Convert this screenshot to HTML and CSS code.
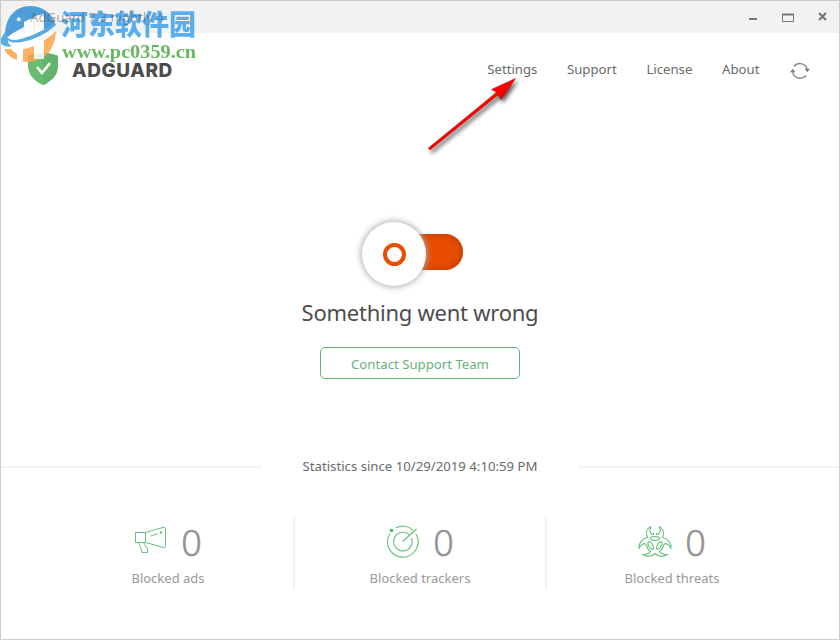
FILE: index.html
```html
<!DOCTYPE html>
<html lang="en">
<head>
<meta charset="utf-8">
<title>AdGuard</title>
<link rel="stylesheet" href="styles.css">
</head>
<body>
<div class="window">
  <header class="titlebar">
    <span class="title">AdGuard 7.3 nightly 4</span>
    <div class="controls">
      <svg width="82" height="16" viewBox="0 0 82 16" fill="none" stroke="#777">
        <path d="M1 10h8" stroke-width="2"/>
        <path d="M34.500 5.500h11v7h-11z"/><path d="M34 5.500h12" stroke-width="2"/>
        <path d="M71 4l7 7M78 4l-7 7" stroke-width="2.200"/>
      </svg>
    </div>
  </header>
  <div class="topbar">
    <div class="brand">
      <svg class="shield" width="32" height="34" viewBox="0 0 32 34"><path d="M16 1C11 1 5 2 1 4v9c0 10 6 16 15 20 9-4 15-10 15-20V4C27 2 21 1 16 1z" fill="#68bc71"/><path d="M16 1v32c9-4 15-10 15-20V4C27 2 21 1 16 1z" fill="#63b36c"/><path d="M10 15l5 6 8-10" fill="none" stroke="#fff" stroke-width="2.600"/></svg>
      <span class="wordmark">ADGUARD</span>
    </div>
    <nav class="nav">
      <a>Settings</a><a>Support</a><a>License</a><a>About</a>
      <svg class="refresh" width="20" height="18" viewBox="0 0 20 18" fill="none" stroke="#8a8a8a" stroke-width="1.500"><path d="M4 4.500A7.500 7.500 0 0 1 17.300 8M16 13.500A7.500 7.500 0 0 1 2.700 9.500"/><path d="M14.500 6.800h5.500l-2.600 3.400zM0 10.200h5.500l-2.800-3.400z" fill="#808080" stroke="none"/></svg>
    </nav>
  </div>
  <main class="status">
    <div class="switch"><div class="track"></div><div class="knob"></div></div>
    <h1>Something went wrong</h1>
    <button class="contact">Contact Support Team</button>
  </main>
  <div class="since"><i></i><span>Statistics since 10/29/2019 4:10:59 PM</span><i></i></div>
  <section class="stats">
    <div class="stat">
      <div class="value">
        <svg width="34" height="34" viewBox="0 0 34 34" fill="none" stroke="#67c27c"><path d="M1.500 7.500h10v10h-10zM11.500 7.500L29 2.500q2.500-.5 2.500 1v18q0 1.500-2 1L11.500 17.500M4 18c3 3 3 6 4 9.500h5.500V23c-2-.5-2.500-3-3.500-5M17 11l7-2.500"/><circle cx="27" cy="7.500" r="1.200" fill="#67c27c" stroke="none"/></svg>
        <b>0</b></div>
      <p>Blocked ads</p>
    </div>
    <div class="stat">
      <div class="value">
        <svg width="34" height="34" viewBox="0 0 34 34" fill="none" stroke="#67c27c" stroke-width="1.150"><path d="M10 2.700A15.300 15.300 0 0 1 27.300 5.300M30 9A15.300 15.300 0 1 1 4 8.500"/><path d="M23.200 9.700A9.300 9.300 0 1 0 25.500 13M16.500 16.500L30.500 4"/><circle cx="5.500" cy="5.500" r="1.800" fill="#4db864" stroke="none"/></svg>
        <b>0</b></div>
      <p>Blocked trackers</p>
    </div>
    <div class="stat">
      <div class="value">
        <svg width="34" height="34" viewBox="0 0 34 34" fill="none" stroke="#67c27c" stroke-width="1.150">
          <path d="M13 1.500C8.500 3.500 7.500 8 9.500 12.500C4 13.500 .5 18 1 23.500M21 1.500C25.500 3.500 26.500 8 24.500 12.500C30 13.500 33.500 18 33 23.500"/>
          <path d="M13 1.500C10.500 6 12.500 9.500 15.500 9.500V8M21 1.500C23.500 6 21.500 9.500 18.500 9.500V8"/>
          <path d="M1 23.500C3 19.500 6 17.500 8 19.500C9.500 21.500 9 25 12.500 26.500C11 29 8 29.500 5 29.500C9 32.500 14 31.500 17 28.500C20 31.500 25 32.500 29 29.500C26 29.500 23 29 21.500 26.500C25 25 24.500 21.500 26 19.500C28 17.500 31 19.500 33 23.500"/>
          <ellipse cx="17" cy="13.500" rx="4.500" ry="1.900"/>
          <ellipse cx="12.700" cy="20.500" rx="4.200" ry="1.900" transform="rotate(60 12.700 20.500)"/>
          <ellipse cx="21.300" cy="20.500" rx="4.200" ry="1.900" transform="rotate(-60 21.300 20.500)"/>
        </svg>
        <b>0</b></div>
      <p>Blocked threats</p>
    </div>
  </section>
  <svg class="pointer" width="110" height="90" viewBox="420 70 110 90"><path d="M428.500 148L497 92 491.500 89.500 515.500 78.500 501 99.500 498.500 94.500 430 150z" fill="red" stroke="#b01010" stroke-width=".6"/></svg>
  <svg class="watermark" width="200" height="70" viewBox="0 0 200 70">
    <path d="M5 36C5 18 15 6 30 6c12 0 22 7 25 17L44 32V15l-11 3-9 4v5L13 33l-8 6z" fill="#308fd5"/>
    <path d="M4 49h8v2c11-1 19-3 28-8 7-4 12-8 16-12-1 19-12 31-28 31C17 62 8 57 4 49z" fill="#ffa348"/>
    <path d="M12 50v-9l11-5v25h-6v-7zM34 36l10-5v28H34z" fill="#fff"/>
    <path d="M24 22l9-4v20l-9 3zM35 16l9-2v20l-9 4z" fill="#fff"/>
    <path d="M1 45C-1 40 2 36 6 31c-2 9 7 11 18 7 13-4 23-10 31-15l1 2c-10 9-22 15-34 17-7 1-12 1-14-2 0 4 2 5 4 6-5 1-9 1-11-3z" fill="#3d9bdc"/>
    <path d="M18 16.500l1.300 1.400 1.700-.2-.8 1.500.8 1.500-1.700-.2-1.300 1.400-.4-1.800-1.600-.7 1.600-.8z" fill="#fff"/>
    <text class="site" x="61" y="35" textLength="135" lengthAdjust="spacingAndGlyphs">河东软件园</text>
    <text class="url" x="62" y="58" textLength="134" lengthAdjust="spacingAndGlyphs">www.pc0359.cn</text>
  </svg>
</div>
</body>
</html>
```
FILE: styles.css
```css
*, *::after { box-sizing: border-box; }
body { margin: 0; background: #fff; font-family: "Noto Sans", "Open Sans", sans-serif; color: #6a6a6a; }
.window { position: relative; width: 840px; height: 640px; border: 1px solid #ccc; overflow: hidden; }
.titlebar { height: 32px; background: #f2f2f2; display: flex; justify-content: space-between; align-items: center; padding: 0 9px 0 29px; }
.title { position: relative; z-index: 2; font-size: 13.200px; color: rgba(70, 70, 70, .45); }
.controls { display: flex; }
.topbar { height: 76px; display: flex; justify-content: space-between; padding: 19px 29px 0 26px; }
.brand { display: flex; gap: 13px; }
.wordmark { font: 800 19px/37px Inter, sans-serif; color: #4d4d4d; letter-spacing: .55px; }
.nav { display: flex; gap: 29.600px; font-size: 13.200px; line-height: 35px; }
.refresh { margin: 10px 0 0 1px; }
.status { display: flex; flex-direction: column; align-items: center; padding-top: 113px; height: 342px; }
.switch { display: flex; align-items: center; flex-direction: row-reverse; width: 101px; height: 64px; margin-right: 15px; }
.track { width: 62px; height: 36px; border-radius: 18px; background: #e84c00; box-shadow: inset 0 0 8px #b94000; margin: -4px 0 0 -25px; }
.knob { position: relative; width: 64px; height: 64px; border-radius: 50%; background: #fff; box-shadow: 0 0 6px 1px #aaa; display: flex; align-items: center; justify-content: center; }
.knob::after { content: ""; width: 23px; height: 23px; border: 4px solid #e84c00; border-radius: 50%; }
h1 { margin: 10px 0 19px; font-size: 22px; line-height: 32px; font-weight: 400; color: #4d4d4d; letter-spacing: -.25px; }
.contact { width: 200px; height: 32px; background: #fff; border: 1px solid #67b279; border-radius: 5px; color: #67b279; font: 13.200px/28px "Noto Sans", sans-serif; padding: 2px 0 0; }
.since { display: flex; align-items: center; justify-content: space-between; height: 32px; font-size: 13.200px; }
.since span { margin-top: -2px; }
.since i { width: 261px; height: 2px; background: #f2f2f2; }
.stats { display: grid; grid-template-columns: 252px 252px 252px; justify-content: center; margin: 34px 0 0 2px; }
.stat { height: 72px; border-right: 2px solid #f2f2f2; display: flex; flex-direction: column; align-items: center; }
.stat:last-child { border: 0; padding-right: 2px; }
.value { height: 51px; display: flex; gap: 13px; align-items: center; }
.value svg { margin-top: -2px; }
.value b { font-size: 36px; font-weight: 300; line-height: 52px; color: #929292; -webkit-text-stroke: .5px #929292; }
.stat p { margin: 0; font-size: 13px; line-height: 20px; color: #999; }
.pointer { position: absolute; left: 419px; top: 69px; filter: drop-shadow(2px 3px 2px #555); }
.watermark { position: absolute; left: -1px; top: -1px; opacity: .84; }
.site { font: 900 28px "Noto Sans CJK SC", sans-serif; fill: #3aa0ee; }
.url { font: bold 19px "Liberation Serif", serif; fill: #4cab43; }
```
